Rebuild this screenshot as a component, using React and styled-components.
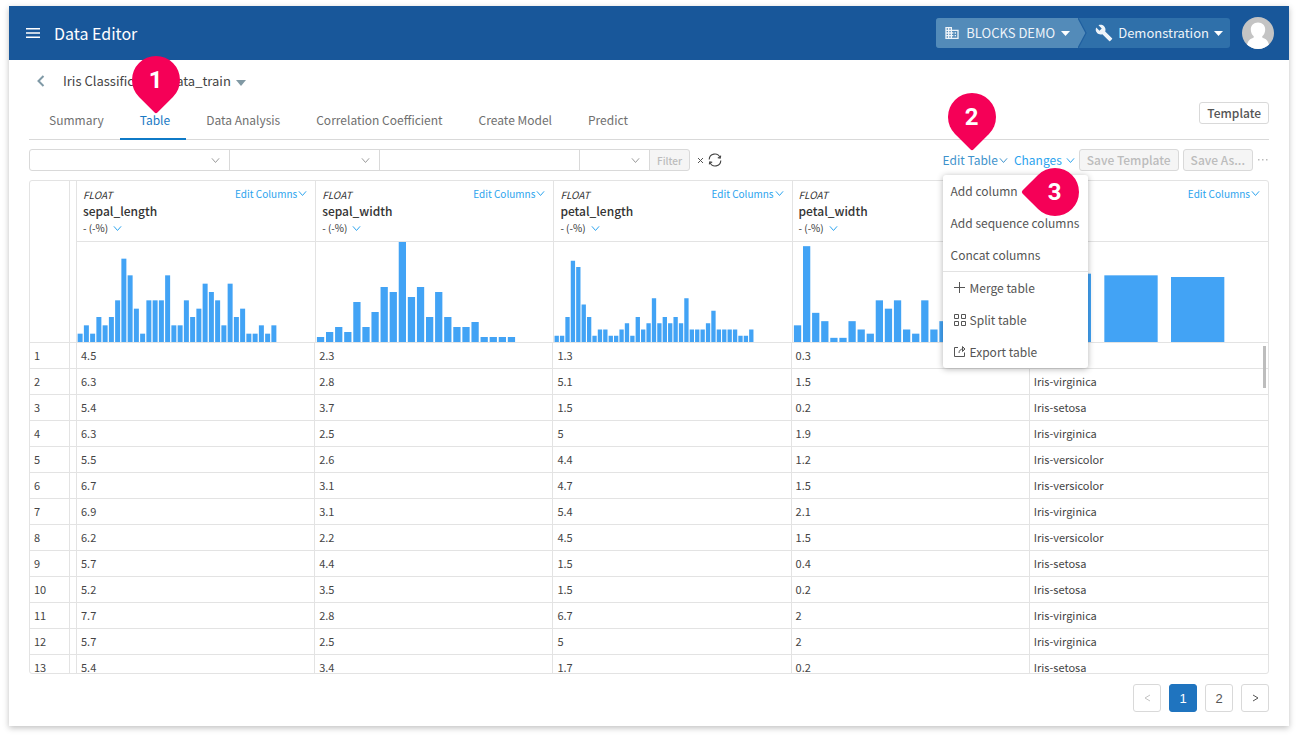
import React from "react";
import styled, { createGlobalStyle, css } from "styled-components";
import { MdBusiness, MdBuild } from "react-icons/md";

const GlobalStyle = createGlobalStyle`
  *, *::before, *::after { box-sizing: border-box; }
  body {
    margin: 0;
    background: #fff;
    color: #444;
    font-family: "Noto Sans CJK JP", "Noto Sans", sans-serif;
    font-size: 13px;
    line-height: 20px;
  }
  button, input, select { font: inherit; color: inherit; margin: 0; }
  button { cursor: pointer; }
  svg { display: block; flex: none; }
`;

const Page = styled.div`
  padding: 6px 9px 12px;
`;

const Window = styled.div`
  background: #fff;
  box-shadow: 0 2px 6px rgba(0, 0, 0, 0.25);
`;

const TopBar = styled.header`
  display: flex;
  align-items: center;
  height: 54px;
  padding: 0 15px 0 17px;
  background: #18579a;
  color: #fff;
`;

const PlainButton = styled.button`
  display: inline-flex;
  align-items: center;
  padding: 0;
  border: 0;
  background: none;
`;

const AppTitle = styled.h1`
  flex: 1;
  margin: 0 0 0 14px;
  font-size: 16px;
  font-weight: 400;
  line-height: 24px;
`;

const Switcher = styled.nav`
  display: flex;
  height: 30px;
  margin-right: 12px;
  border-radius: 3px;
  overflow: hidden;
  background: #2f70aa;
`;

const SwitcherButton = styled(PlainButton)`
  font-size: 13px;
  color: #eef4f9;
  gap: ${(p) => p.$gap};
  padding: ${(p) => p.$padding};
  background: ${(p) => (p.$active ? "#538bb9" : "transparent")};
`;

const Avatar = styled(PlainButton)`
  border-radius: 50%;
  overflow: hidden;
`;

const Main = styled.main`
  padding: 0 20px 14px;
`;

const Crumb = styled.div`
  display: flex;
  align-items: center;
  height: 42px;
  padding-left: 7px;
`;

const CrumbTitle = styled(PlainButton)`
  margin-left: 17px;
  gap: 5px;
  font-size: 13px;
  color: #444;
  svg { margin-top: 3px; }
`;

const TabRow = styled.div`
  display: flex;
  align-items: flex-start;
  justify-content: space-between;
  height: 38px;
  border-bottom: 1px solid #d9d9d9;
`;

const Tabs = styled.nav`
  display: flex;
`;

const Tab = styled.a`
  position: relative;
  height: 38px;
  padding: 8px 16px 8px 20px;
  font-size: 12px;
  color: ${(p) => (p.$active ? "#1a7ac4" : "#707070")};
  border-bottom: 2px solid ${(p) => (p.$active ? "#0f7ac7" : "transparent")};
  text-decoration: none;
`;

const OutlineButton = styled.button`
  height: 22px;
  padding: 0 7px;
  border: 1px solid #d9d9d9;
  border-radius: 3px;
  background: ${(p) => (p.disabled ? "#f5f5f5" : "#fff")};
  color: ${(p) => (p.disabled ? "#bcbcbc" : "#555")};
  font-size: 12px;
  font-weight: 500;
  line-height: 20px;
`;

const Toolbar = styled.div`
  display: flex;
  align-items: center;
  justify-content: space-between;
  height: 22px;
  margin: 9px 0;
`;

const FilterGroup = styled.form`
  display: flex;
  align-items: center;
`;

const fieldBox = css`
  width: 100%;
  height: 22px;
  padding: 0 8px;
  border: 1px solid #d9d9d9;
  background: #fff;
  border-radius: 0;
  appearance: none;
  outline: 0;
`;

const Field = styled.label`
  display: flex;
  align-items: center;
  width: ${(p) => p.$width};
  margin-right: -1px;
  select, input { ${fieldBox} }
  select { border-radius: ${(p) => (p.$first ? "3px 0 0 3px" : "0")}; }
  svg { margin-left: -19px; margin-right: 10px; pointer-events: none; }
`;

const FilterButton = styled(OutlineButton)`
  width: 41px;
  padding: 2px 0 0;
  border-radius: 0 3px 3px 0;
  font-size: 10px;
  line-height: 18px;
`;

const FilterTools = styled.div`
  display: flex;
  align-items: center;
  gap: 4px;
  margin-left: 7px;
`;

const Actions = styled.div`
  display: flex;
  align-items: center;
  gap: 4px;
`;

const MenuAnchor = styled.div`
  position: relative;
  margin-right: 2px;
`;

const LinkButton = styled(PlainButton)`
  gap: ${(p) => p.$gap || "1px"};
  color: ${(p) => (p.$open ? "#3f93cc" : "#2ba3ee")};
  font-size: ${(p) => (p.$small ? "10px" : "12px")};
  line-height: 20px;
`;

const Menu = styled.div`
  position: absolute;
  z-index: 2;
  top: 25px;
  left: 0;
  width: 145px;
  border-radius: 3px;
  background: #fff;
  box-shadow: 0 1px 6px rgba(0, 0, 0, 0.3);
`;

const MenuItem = styled.button`
  position: relative;
  display: flex;
  align-items: center;
  gap: 3px;
  width: 100%;
  height: 32px;
  padding: ${(p) => (p.$icon ? "0 0 0 10px" : "0 0 0 8px")};
  border: 0;
  background: none;
  color: #555;
  font-size: 12px;
  white-space: nowrap;
`;

const MenuRule = styled.hr`
  height: 1px;
  margin: 0;
  border: 0;
  background: #e2e2e2;
`;

const pinPlaces = {
  tab: "top: -46px; left: 12px;",
  button: "top: -57px; left: 5px;",
  item: "top: -7px; left: 88px;",
};

const Pin = styled.span`
  position: absolute;
  z-index: 3;
  display: flex;
  align-items: center;
  justify-content: center;
  width: 48px;
  height: 48px;
  color: #fff;
  font: 700 24px/28px Roboto, sans-serif;
  pointer-events: none;
  ${(p) => pinPlaces[p.$on]}
  &::before {
    content: "";
    position: absolute;
    inset: 0;
    z-index: -1;
    background: #f50057;
    border-radius: 50% 50% 2px 50%;
    transform: rotate(${(p) => (p.$on === "item" ? "135deg" : "45deg")});
  }
`;

const Grid = styled.div`
  position: relative;
  height: 494px;
  overflow: hidden;
  border: 1px solid #e3e3e3;
  border-radius: 3px;
`;

const DataTable = styled.table`
  width: 100%;
  table-layout: fixed;
  border-collapse: separate;
  border-spacing: 0;
  font-size: 11px;
`;

const Col = styled.col`
  width: ${(p) => p.$width};
`;

const HeadCell = styled.th`
  height: 61px;
  padding: 4px 6px 0;
  border-left: ${(p) => (p.$first ? "0" : "1px solid #e3e3e3")};
  border-bottom: 1px solid #e3e3e3;
  text-align: left;
  vertical-align: top;
  font-weight: 400;
  color: #333;
`;

const EmptyCell = styled.td`
  padding: 0;
  border-right: 1px solid #e3e3e3;
  border-bottom: 1px solid #e3e3e3;
`;

const HeadTop = styled.div`
  display: flex;
  justify-content: space-between;
  height: 17px;
  padding-right: 2px;
  font-size: 10px;
  line-height: 20px;
`;

const ColumnName = styled.div`
  height: 18px;
  font-size: 12px;
  font-weight: 500;
  line-height: 17px;
`;

const Stat = styled(PlainButton)`
  gap: 5px;
  height: 16px;
  font-size: 10px;
  line-height: 16px;
  vertical-align: top;
`;

const ChartCell = styled.td`
  height: 101px;
  padding: 0;
  border-left: ${(p) => (p.$first ? "0" : "1px solid #e3e3e3")};
  border-bottom: 1px solid #e3e3e3;
  vertical-align: bottom;
`;

const Cell = styled.td`
  height: 26px;
  padding: 0 4px 2px;
  border-right: ${(p) => (p.$last ? "0" : "1px solid #e3e3e3")};
  border-bottom: 1px solid #e3e3e3;
  line-height: 20px;
`;

const ScrollThumb = styled.div`
  position: absolute;
  top: 165px;
  right: 2px;
  width: 3px;
  height: 42px;
  background: #bdbdbd;
`;

const Pager = styled.nav`
  display: flex;
  justify-content: flex-end;
  gap: 8px;
  margin-top: 10px;
`;

const PageButton = styled.button`
  display: flex;
  align-items: center;
  justify-content: center;
  width: 28px;
  height: 28px;
  padding: 2px 0 0;
  border: 1px solid ${(p) => (p.$current ? "#1f74bf" : "#d9d9d9")};
  border-radius: 3px;
  background: ${(p) => (p.$current ? "#1f74bf" : "#fff")};
  color: ${(p) => (p.$current ? "#fff" : p.disabled ? "#c4c4c4" : "#555")};
  font: 13px/20px "Liberation Sans", Arial, sans-serif;
  svg { margin-top: -3px; }
`;

const Chevron = ({ size = 9, color = "currentColor" }) => (
  <svg width={size} height={size} viewBox="0 0 10 10" fill="none" stroke={color} strokeWidth="1.1" aria-hidden="true">
    <path d="M1 2.6 5 7.2 9 2.6" />
  </svg>
);

const Caret = ({ color = "#fff", width = 9 }) => (
  <svg width={width} height={width === 9 ? 5 : 6} viewBox="0 0 10 5" preserveAspectRatio="none" fill={color} aria-hidden="true">
    <path d="M0 0h10L5 5z" />
  </svg>
);

const MenuIcon = () => (
  <svg width="14" height="10" viewBox="0 0 14 10" fill="#fff" aria-hidden="true">
    <path d="M0 0h14v1.5H0zM0 4.2h14v1.5H0zM0 8.4h14v1.5H0z" />
  </svg>
);

const SwitcherArrow = () => (
  <svg width="9" height="30" viewBox="0 0 9 30" aria-hidden="true">
    <path d="M0 0 8 15 0 30z" fill="#538bb9" />
    <path d="M0 0 8 15 0 30" fill="none" stroke="#1f5f9f" strokeWidth="1.2" />
  </svg>
);

const AvatarIcon = () => (
  <svg width="32" height="32" viewBox="0 0 32 32" aria-hidden="true">
    <rect width="32" height="32" fill="#c4c4c4" />
    <path d="M16 5.500c4.400 0 7.200 3 7.200 7 0 3-1.200 5.200-2.900 6.700-.4 1 .2 1.600 1.500 2.100 3 1 4.900 3.700 5.400 7.700V32H4.800v-3c.5-4 2.400-6.700 5.400-7.700 1.300-.5 1.900-1.100 1.500-2.100-1.700-1.500-2.900-3.700-2.900-6.700 0-4 2.800-7 7.200-7z" fill="#fff" />
  </svg>
);

const BackIcon = () => (
  <svg width="10" height="14" viewBox="0 0 10 14" fill="none" stroke="#7f99a6" strokeWidth="2" aria-hidden="true">
    <path d="M7.500 2 2.500 7l5 5" />
  </svg>
);

const ClearIcon = () => (
  <svg width="7" height="7" viewBox="0 0 7 7" fill="none" stroke="#555" strokeWidth="1" aria-hidden="true">
    <path d="M1 1l5 5M6 1 1 6" />
  </svg>
);

const RefreshIcon = () => (
  <svg width="14" height="14" viewBox="0 0 14 14" fill="none" stroke="#444" strokeWidth="1.1" aria-hidden="true">
    <path d="M1.200 6.500A5.600 5.600 0 0 1 12 4.600M12.800 7.500A5.600 5.600 0 0 1 2 9.400" />
    <path d="M12.700 2.600 12.200 5.100 9.800 4.600M1.300 11.400 1.800 8.900 4.200 9.400" />
  </svg>
);

const PlusIcon = () => (
  <svg width="14" height="14" viewBox="0 0 14 14" fill="none" stroke="currentColor" aria-hidden="true">
    <path d="M6.500 1v11M1 6.500h11" />
  </svg>
);

const SplitIcon = () => (
  <svg width="14" height="14" viewBox="0 0 14 14" fill="none" stroke="currentColor" aria-hidden="true">
    <path d="M1.500 1.500h4v4h-4zM8.500 1.500h4v4h-4zM1.500 8.500h4v4h-4zM8.500 8.500h4v4h-4z" />
  </svg>
);

const ExportIcon = () => (
  <svg width="14" height="14" viewBox="0 0 14 14" fill="none" stroke="currentColor" aria-hidden="true">
    <path d="M5 2.500H1.500v9h10V7.500" />
    <path d="M6 8C6 5.500 7.500 4 10.500 4" />
    <path d="M9.500 1.500 12 4 9.500 6.500z" />
  </svg>
);

const PageArrow = ({ next }) => (
  <svg width="7" height="8" viewBox="0 0 7 8" fill="none" stroke="currentColor" aria-hidden="true">
    <path d={next ? "M1 1l5 3-5 3" : "M6 1 1 4l5 3"} />
  </svg>
);

const Histogram = ({ slots, values, unit, name }) => {
  const pitch = 200 / slots;
  return (
    <svg width="200" height="100" viewBox="0 0 200 100" fill="#42a3f5" role="img" aria-label={`${name} distribution`}>
      {values.map((v, i) => (
        <rect key={i} x={(i + 0.1) * pitch} y={100 - v * unit} width={pitch * 0.8} height={v * unit} />
      ))}
    </svg>
  );
};

const TABS = ["Summary", "Table", "Data Analysis", "Correlation Coefficient", "Create Model", "Predict"];

const COLUMNS = [
  { name: "sepal_length", type: "FLOAT", slots: 32, unit: 100 / 12,
    values: [1, 2, 1, 3, 2, 3, 5, 10, 8, 4, 1, 5, 5, 5, 8, 2, 2, 5, 3, 4, 7, 6, 5, 2, 7, 3, 4, 1, 1, 2, 1, 2] },
  { name: "sepal_width", type: "FLOAT", slots: 22, unit: 5,
    values: [1, 2, 3, 2, 8, 3, 6, 11, 10, 20, 9, 11, 5, 10, 5, 3, 3, 4, 1, 1, 1, 1] },
  { name: "petal_length", type: "FLOAT", slots: 37, unit: 100 / 16,
    values: [1, 1, 4, 13, 12, 6, 4, 1, 2, 2, 1, 1, 2, 3, 1, 4, 2, 3, 7, 3, 4, 3, 4, 3, 7, 2, 2, 2, 3, 5, 2, 2, 2, 2, 1, 1, 2] },
  { name: "petal_width", type: "FLOAT", slots: 22, unit: 100 / 24,
    values: [4, 23, 7, 5, 1, 1, 5, 3, 2, 10, 8, 10, 3, 2, 10, 3, 5] },
  { name: "class", type: "STRING", slots: 3, unit: 100 / 60, values: [41, 40, 39] },
];

const ROWS = [
  ["4.5", "2.3", "1.3", "0.3", "Iris-setosa"],
  ["6.3", "2.8", "5.1", "1.5", "Iris-virginica"],
  ["5.4", "3.7", "1.5", "0.2", "Iris-setosa"],
  ["6.3", "2.5", "5", "1.9", "Iris-virginica"],
  ["5.5", "2.6", "4.4", "1.2", "Iris-versicolor"],
  ["6.7", "3.1", "4.7", "1.5", "Iris-versicolor"],
  ["6.9", "3.1", "5.4", "2.1", "Iris-virginica"],
  ["6.2", "2.2", "4.5", "1.5", "Iris-versicolor"],
  ["5.7", "4.4", "1.5", "0.4", "Iris-setosa"],
  ["5.2", "3.5", "1.5", "0.2", "Iris-setosa"],
  ["7.7", "2.8", "6.7", "2", "Iris-virginica"],
  ["5.7", "2.5", "5", "2", "Iris-virginica"],
  ["5.4", "3.4", "1.7", "0.2", "Iris-setosa"],
];

export default function App() {
  return (
    <>
      <GlobalStyle />
      <Page>
        <Window>
          <TopBar>
            <PlainButton aria-label="Menu"><MenuIcon /></PlainButton>
            <AppTitle>Data Editor</AppTitle>
            <Switcher>
              <SwitcherButton $active $gap="6px" $padding="0 8px">
                <MdBusiness size={16} />
                <span>BLOCKS DEMO</span>
                <Caret />
              </SwitcherButton>
              <SwitcherArrow />
              <SwitcherButton $gap="5px" $padding="0 7px 0 8px">
                <MdBuild size={18} />
                <span>Demonstration</span>
                <Caret />
              </SwitcherButton>
            </Switcher>
            <Avatar aria-label="Account"><AvatarIcon /></Avatar>
          </TopBar>
          <Main>
            <Crumb>
              <PlainButton aria-label="Back"><BackIcon /></PlainButton>
              <CrumbTitle>Iris Classification data_train <Caret color="#8199a4" width={10} /></CrumbTitle>
            </Crumb>
            <TabRow>
              <Tabs>
                {TABS.map((t) => (
                  <Tab key={t} href="#" $active={t === "Table"}>
                    {t}
                    {t === "Table" && <Pin $on="tab">1</Pin>}
                  </Tab>
                ))}
              </Tabs>
              <OutlineButton>Template</OutlineButton>
            </TabRow>
            <Toolbar>
              <FilterGroup>
                <Field $width="201px" $first>
                  <select aria-label="Column" />
                  <Chevron color="#999" />
                </Field>
                <Field $width="151px">
                  <select aria-label="Condition" />
                  <Chevron color="#999" />
                </Field>
                <Field $width="201px"><input type="text" aria-label="Value" /></Field>
                <Field $width="71px">
                  <select aria-label="Operator" />
                  <Chevron color="#999" />
                </Field>
                <FilterButton type="button" disabled>Filter</FilterButton>
                <FilterTools>
                  <PlainButton type="button" aria-label="Clear filter"><ClearIcon /></PlainButton>
                  <PlainButton type="button" aria-label="Reload"><RefreshIcon /></PlainButton>
                </FilterTools>
              </FilterGroup>
              <Actions>
                <MenuAnchor>
                  <LinkButton $open>Edit Table<Chevron /></LinkButton>
                  <Pin $on="button">2</Pin>
                  <Menu>
                    <MenuItem>Add column<Pin $on="item">3</Pin></MenuItem>
                    <MenuItem>Add sequence columns</MenuItem>
                    <MenuItem>Concat columns</MenuItem>
                    <MenuRule />
                    <MenuItem $icon><PlusIcon />Merge table</MenuItem>
                    <MenuItem $icon><SplitIcon />Split table</MenuItem>
                    <MenuItem $icon><ExportIcon />Export table</MenuItem>
                  </Menu>
                </MenuAnchor>
                <LinkButton $gap="4px">Changes<Chevron /></LinkButton>
                <OutlineButton disabled>Save Template</OutlineButton>
                <OutlineButton disabled>Save As...</OutlineButton>
                <PlainButton aria-label="More">
                  <svg width="12" height="4" viewBox="0 0 12 4" fill="#bbb" aria-hidden="true">
                    <path d="M1 1h1.500v1.500H1zM5 1h1.500v1.500H5zM9 1h1.500v1.500H9z" />
                  </svg>
                </PlainButton>
              </Actions>
            </Toolbar>
            <Grid>
              <DataTable>
                <colgroup>
                  <Col $width="40px" />
                  <Col $width="7px" />
                  {COLUMNS.map((c) => <Col key={c.name} />)}
                </colgroup>
                <thead>
                  <tr>
                    <EmptyCell rowSpan={2} />
                    <EmptyCell rowSpan={2} />
                    {COLUMNS.map((c, i) => (
                      <HeadCell key={c.name} scope="col" $first={i === 0}>
                        <HeadTop>
                          <em>{c.type}</em>
                          <LinkButton $small>Edit Columns<Chevron /></LinkButton>
                        </HeadTop>
                        <ColumnName>{c.name}</ColumnName>
                        <Stat>- (-%) <Chevron color="#2ba3ee" /></Stat>
                      </HeadCell>
                    ))}
                  </tr>
                  <tr>
                    {COLUMNS.map((c, i) => (
                      <ChartCell key={c.name} $first={i === 0}><Histogram {...c} /></ChartCell>
                    ))}
                  </tr>
                </thead>
                <tbody>
                  {ROWS.map((r, i) => (
                    <tr key={i}>
                      <Cell>{i + 1}</Cell>
                      <EmptyCell />
                      {r.map((v, j) => <Cell key={j} $last={j === r.length - 1}>{v}</Cell>)}
                    </tr>
                  ))}
                </tbody>
              </DataTable>
              <ScrollThumb />
            </Grid>
            <Pager aria-label="Pages">
              <PageButton disabled aria-label="Previous page"><PageArrow /></PageButton>
              <PageButton $current>1</PageButton>
              <PageButton>2</PageButton>
              <PageButton aria-label="Next page"><PageArrow next /></PageButton>
            </Pager>
          </Main>
        </Window>
      </Page>
    </>
  );
}
